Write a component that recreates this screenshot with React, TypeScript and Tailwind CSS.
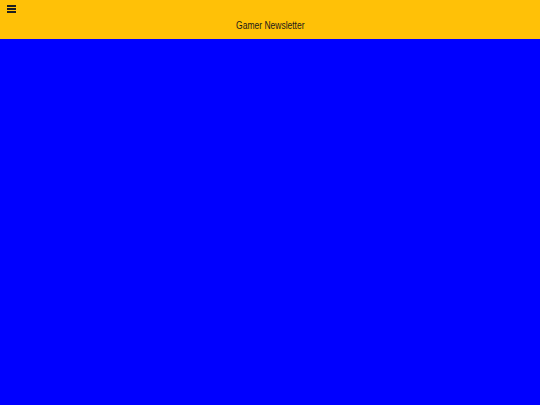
import React from "react";

export default function App() {
  return (
    <div className="w-[540px] h-[405px] flex flex-col bg-[#0000ff]" style={{ fontFamily: "'Liberation Sans', Arial, sans-serif" }}>
      <header className="h-[39px] bg-[#ffc107] flex flex-col">
        <div className="h-[20px] pl-[7px] pt-[5px]">
          <svg width="9" height="8" viewBox="0 0 9 8" className="block">
            <rect x="0" y="0" width="9" height="2" fill="#1f1f1f" />
            <rect x="0" y="3" width="9" height="2" fill="#1f1f1f" />
            <rect x="0" y="6" width="9" height="2" fill="#1f1f1f" />
          </svg>
        </div>
        <div className="flex justify-center">
          <span className="inline-block text-[10px] leading-[12px] text-[#1a1a1a] scale-x-[0.85]">Gamer Newsletter</span>
        </div>
      </header>
      <main className="flex-1" />
    </div>
  );
}
